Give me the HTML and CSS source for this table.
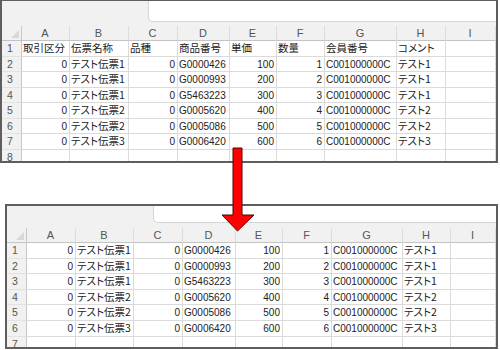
FILE: index.html
```
<!DOCTYPE html>
<html lang="ja">
<head>
<meta charset="utf-8">
<link rel="stylesheet" href="styles.css">
</head>
<body>
<div class="page">
  <div class="sheet sheet-top">
    <div class="fbar"><div class="fbox"></div></div>
    <div class="grid">
      <div class="row hdr"><div class="corner"><span class="tri"></span></div><div>A</div><div>B</div><div>C</div><div>D</div><div>E</div><div>F</div><div>G</div><div>H</div><div>I</div></div>
      <div class="row"><div class="rn">1</div><div class="j">取引区分</div><div class="j">伝票名称</div><div class="j">品種</div><div class="j">商品番号</div><div class="j">単価</div><div class="j">数量</div><div class="j">会員番号</div><div class="j">コメント</div><div></div></div>
      <div class="row"><div class="rn">2</div><div class="r">0</div><div class="j">テスト伝票1</div><div class="r">0</div><div>G0000426</div><div class="r">100</div><div class="r">1</div><div>C001000000C</div><div class="j">テスト1</div><div></div></div>
      <div class="row"><div class="rn">3</div><div class="r">0</div><div class="j">テスト伝票1</div><div class="r">0</div><div>G0000993</div><div class="r">200</div><div class="r">2</div><div>C001000000C</div><div class="j">テスト1</div><div></div></div>
      <div class="row"><div class="rn">4</div><div class="r">0</div><div class="j">テスト伝票1</div><div class="r">0</div><div>G5463223</div><div class="r">300</div><div class="r">3</div><div>C001000000C</div><div class="j">テスト1</div><div></div></div>
      <div class="row"><div class="rn">5</div><div class="r">0</div><div class="j">テスト伝票2</div><div class="r">0</div><div>G0005620</div><div class="r">400</div><div class="r">4</div><div>C001000000C</div><div class="j">テスト2</div><div></div></div>
      <div class="row"><div class="rn">6</div><div class="r">0</div><div class="j">テスト伝票2</div><div class="r">0</div><div>G0005086</div><div class="r">500</div><div class="r">5</div><div>C001000000C</div><div class="j">テスト2</div><div></div></div>
      <div class="row"><div class="rn">7</div><div class="r">0</div><div class="j">テスト伝票3</div><div class="r">0</div><div>G0006420</div><div class="r">600</div><div class="r">6</div><div>C001000000C</div><div class="j">テスト3</div><div></div></div>
      <div class="row"><div class="rn">8</div><div></div><div></div><div></div><div></div><div></div><div></div><div></div><div></div><div></div></div>
    </div>
  </div>

  <div class="sheet sheet-bottom">
    <div class="fbar"><div class="fbox"></div></div>
    <div class="grid">
      <div class="row hdr"><div class="corner"><span class="tri"></span></div><div>A</div><div>B</div><div>C</div><div>D</div><div>E</div><div>F</div><div>G</div><div>H</div><div>I</div></div>
      <div class="row"><div class="rn">1</div><div class="r">0</div><div class="j">テスト伝票1</div><div class="r">0</div><div>G0000426</div><div class="r">100</div><div class="r">1</div><div>C001000000C</div><div class="j">テスト1</div><div></div></div>
      <div class="row"><div class="rn">2</div><div class="r">0</div><div class="j">テスト伝票1</div><div class="r">0</div><div>G0000993</div><div class="r">200</div><div class="r">2</div><div>C001000000C</div><div class="j">テスト1</div><div></div></div>
      <div class="row"><div class="rn">3</div><div class="r">0</div><div class="j">テスト伝票1</div><div class="r">0</div><div>G5463223</div><div class="r">300</div><div class="r">3</div><div>C001000000C</div><div class="j">テスト1</div><div></div></div>
      <div class="row"><div class="rn">4</div><div class="r">0</div><div class="j">テスト伝票2</div><div class="r">0</div><div>G0005620</div><div class="r">400</div><div class="r">4</div><div>C001000000C</div><div class="j">テスト2</div><div></div></div>
      <div class="row"><div class="rn">5</div><div class="r">0</div><div class="j">テスト伝票2</div><div class="r">0</div><div>G0005086</div><div class="r">500</div><div class="r">5</div><div>C001000000C</div><div class="j">テスト2</div><div></div></div>
      <div class="row"><div class="rn">6</div><div class="r">0</div><div class="j">テスト伝票3</div><div class="r">0</div><div>G0006420</div><div class="r">600</div><div class="r">6</div><div>C001000000C</div><div class="j">テスト3</div><div></div></div>
      <div class="row"><div class="rn">7</div><div></div><div></div><div></div><div></div><div></div><div></div><div></div><div></div><div></div></div>
    </div>
  </div>

  <svg class="arrow" width="35" height="86" viewBox="0 0 35 86">
    <polygon points="12,1 21,1 21,68 33,68 16.5,84 1,68 12,68" fill="#ff0000" stroke="#5a0000" stroke-width="1"/>
  </svg>
</div>
</body>
</html>
```

FILE: styles.css
```
html, body {
  margin: 0;
  padding: 0;
  background: #ffffff;
}

.page {
  position: relative;
  width: 500px;
  height: 350px;
  overflow: hidden;
}

.sheet {
  box-sizing: border-box;
  border: 2px solid #5e5e5e;
  background: #ffffff;
  overflow: hidden;
  font-family: "Liberation Sans", "Noto Sans CJK JP", sans-serif;
  font-size: 10px;
  color: #222;
}

.sheet-top {
  width: 498px;
  height: 163px;
  border-top-width: 1px;
  --cols: 20px 48px 59px 49px 52px 47px 48px 72px 49px 50px;
  --fbar: 25px;
  --fbox: 21px;
  --rowh: 15.5px;
}

.sheet-bottom {
  width: 493px;
  height: 145px;
  margin-left: 5px;
  margin-top: 41px;
  --cols: 20px 49px 58px 49px 53px 47px 49px 71px 48px 45px;
  --fbar: 22px;
  --fbox: 17px;
  --rowh: 15.6px;
}

.fbar {
  height: var(--fbar);
  background: #f1f1f1;
  display: flex;
}

.fbox {
  box-sizing: border-box;
  margin-left: 146px;
  flex: 1;
  height: var(--fbox);
  background: #ffffff;
  border-left: 1px solid #d6d6d6;
  border-bottom: 1px solid #d6d6d6;
  border-bottom-left-radius: 5px;
}

.grid {
  display: flex;
  flex-direction: column;
}

.row {
  display: grid;
  grid-template-columns: var(--cols);
  height: var(--rowh);
  flex: none;
}

.row > div {
  box-sizing: border-box;
  border-right: 1px solid #dadada;
  border-bottom: 1px solid #dadada;
  padding: 0 2px 0 1px;
  white-space: nowrap;
  overflow: hidden;
  line-height: 15px;
}

.row > .r {
  text-align: right;
}

.row > .j {
  font-family: "Noto Sans CJK JP", "Liberation Sans", sans-serif;
  font-size: 10.5px;
  font-feature-settings: "palt" 1;
  padding-left: 1px;
  line-height: 14px;
}

.row > .rn {
  background: #f1f1f1;
  color: #555;
  font-size: 10.5px;
  padding-left: 5px;
  border-right: 1px solid #c8c8c8;
  border-bottom: 1px solid #e2e2e2;
}

.hdr {
  height: 15px;
}

.hdr > div {
  background: #f1f1f1;
  color: #555;
  font-size: 11px;
  text-align: center;
  border-bottom: 1px solid #c4c4c4;
  border-right: 1px solid #dcdcdc;
  line-height: 14px;
}

.hdr > .corner {
  position: relative;
  border-right: 1px solid #c8c8c8;
}

.tri {
  position: absolute;
  right: 2px;
  bottom: 2px;
  width: 0;
  height: 0;
  border-left: 8px solid transparent;
  border-bottom: 8px solid #d8d8d8;
}

.arrow {
  position: absolute;
  left: 221px;
  top: 147px;
}
```
